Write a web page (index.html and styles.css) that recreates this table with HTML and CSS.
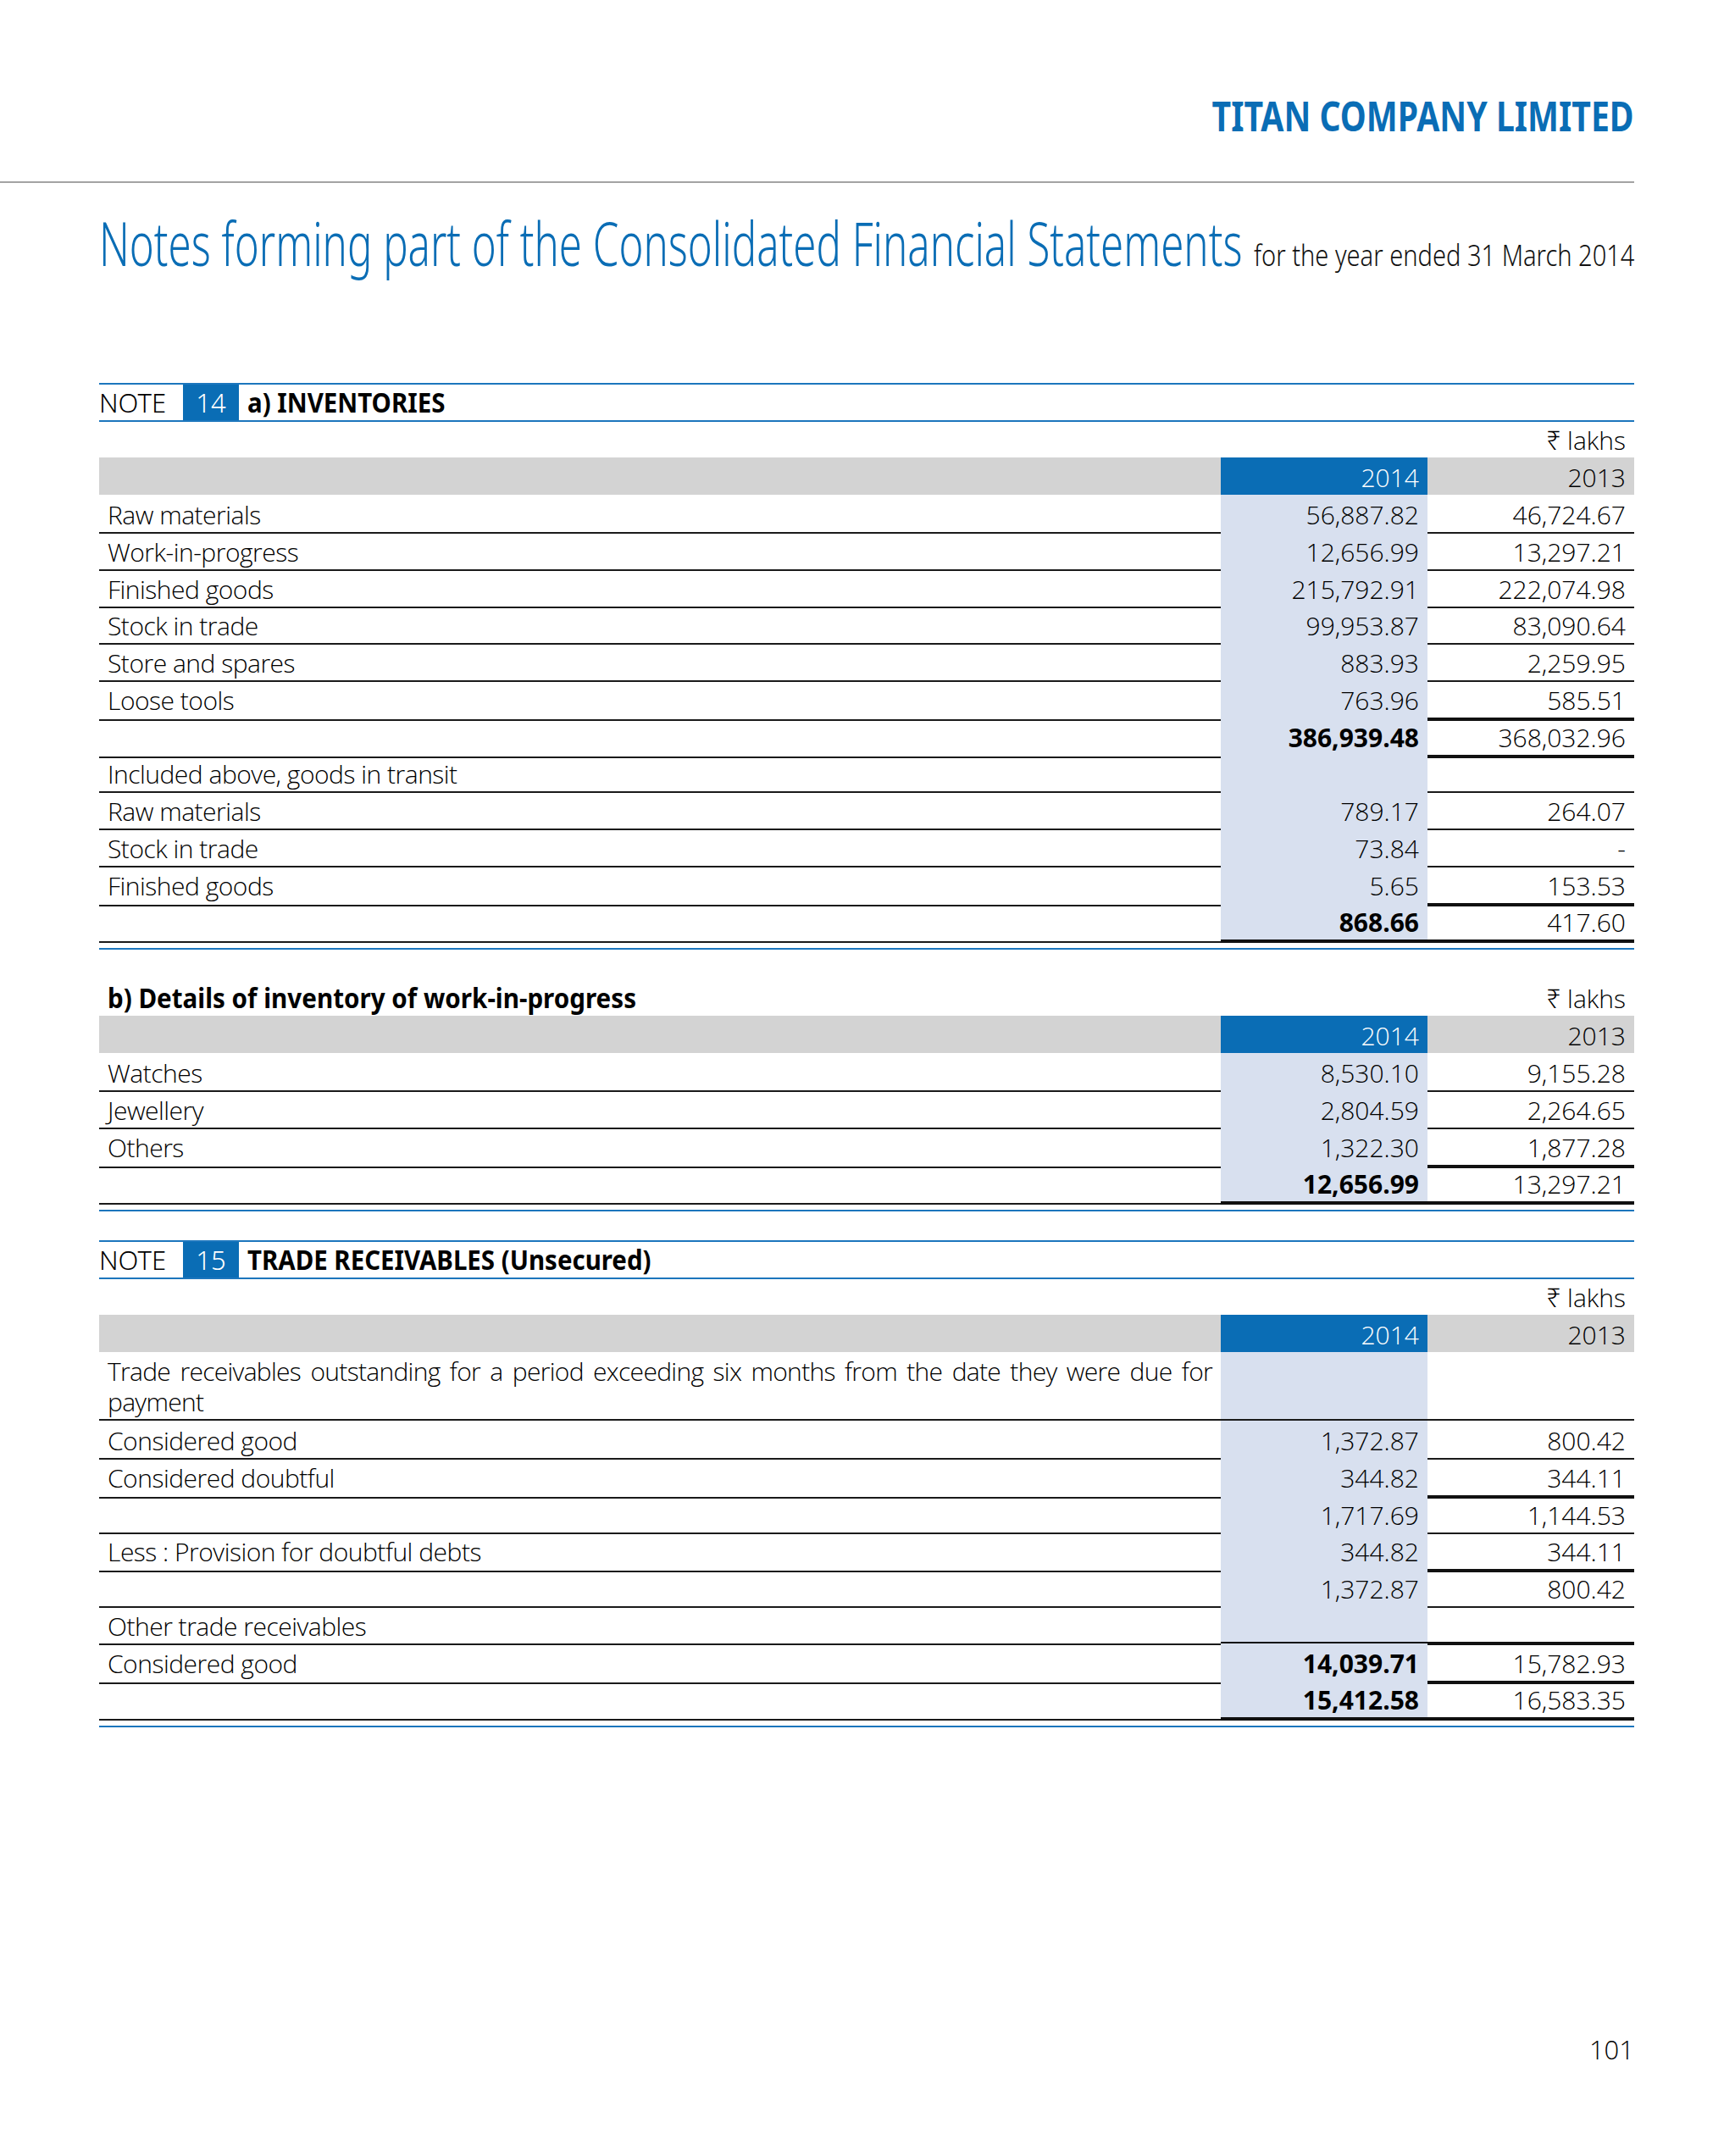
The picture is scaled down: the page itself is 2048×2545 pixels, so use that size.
FILE: index.html
```html
<!DOCTYPE html>
<html>
<head>
<meta charset="utf-8">
<link rel="stylesheet" href="styles.css">
</head>
<body>
<header class="masthead">
  <span class="company">TITAN COMPANY LIMITED</span>
</header>
<div class="page">
  <h1 class="title">
    <span class="title-main-box"><span class="title-main">Notes forming part of the Consolidated Financial Statements</span></span>
    <span class="title-sub-box"><span class="title-sub">for the year ended 31 March 2014</span></span>
  </h1>

  <section class="note note-14">
    <div class="note-head"><span class="note-label">NOTE</span><span class="note-num">14</span><span class="note-title">a) INVENTORIES</span></div>
    <div class="unit">₹ lakhs</div>
    <div class="tbl">
      <div class="r head"><div class="c l"></div><div class="c v cur">2014</div><div class="c v prev">2013</div></div>
      <div class="r"><div class="c l b1">Raw materials</div><div class="c v cur b1">56,887.82</div><div class="c v b1">46,724.67</div></div>
      <div class="r"><div class="c l b1">Work-in-progress</div><div class="c v cur b1">12,656.99</div><div class="c v b1">13,297.21</div></div>
      <div class="r"><div class="c l b1">Finished goods</div><div class="c v cur b1">215,792.91</div><div class="c v b1">222,074.98</div></div>
      <div class="r"><div class="c l b1">Stock in trade</div><div class="c v cur b1">99,953.87</div><div class="c v b1">83,090.64</div></div>
      <div class="r"><div class="c l b1">Store and spares</div><div class="c v cur b1">883.93</div><div class="c v b1">2,259.95</div></div>
      <div class="r"><div class="c l b1">Loose tools</div><div class="c v cur b2">763.96</div><div class="c v b2">585.51</div></div>
      <div class="r"><div class="c l b1"></div><div class="c v cur b2 bold">386,939.48</div><div class="c v b2">368,032.96</div></div>
      <div class="r"><div class="c l b1">Included above, goods in transit</div><div class="c v cur b1"></div><div class="c v b1"></div></div>
      <div class="r"><div class="c l b1">Raw materials</div><div class="c v cur b1">789.17</div><div class="c v b1">264.07</div></div>
      <div class="r"><div class="c l b1">Stock in trade</div><div class="c v cur b1">73.84</div><div class="c v b1">-</div></div>
      <div class="r"><div class="c l b1">Finished goods</div><div class="c v cur b2">5.65</div><div class="c v b2">153.53</div></div>
      <div class="r"><div class="c l b1"></div><div class="c v cur b2 bold">868.66</div><div class="c v b2">417.60</div></div>
    </div>
    <div class="close-rule"></div>
  </section>

  <section class="note note-b">
    <div class="sub-head"><span class="sub-title">b) Details of inventory of work-in-progress</span><span class="unit-inline">₹ lakhs</span></div>
    <div class="tbl">
      <div class="r head"><div class="c l"></div><div class="c v cur">2014</div><div class="c v prev">2013</div></div>
      <div class="r"><div class="c l b1">Watches</div><div class="c v cur b1">8,530.10</div><div class="c v b1">9,155.28</div></div>
      <div class="r"><div class="c l b1">Jewellery</div><div class="c v cur b1">2,804.59</div><div class="c v b1">2,264.65</div></div>
      <div class="r"><div class="c l b1">Others</div><div class="c v cur b2">1,322.30</div><div class="c v b2">1,877.28</div></div>
      <div class="r"><div class="c l b1"></div><div class="c v cur b2 bold">12,656.99</div><div class="c v b2">13,297.21</div></div>
    </div>
    <div class="close-rule"></div>
  </section>

  <section class="note note-15">
    <div class="note-head"><span class="note-label">NOTE</span><span class="note-num">15</span><span class="note-title">TRADE RECEIVABLES (Unsecured)</span></div>
    <div class="unit">₹ lakhs</div>
    <div class="tbl">
      <div class="r head"><div class="c l"></div><div class="c v cur">2014</div><div class="c v prev">2013</div></div>
      <div class="r tall"><div class="c l b1 wrap">Trade receivables outstanding for a period exceeding six months from the date they were due for payment</div><div class="c v cur b1"></div><div class="c v b1"></div></div>
      <div class="r"><div class="c l b1">Considered good</div><div class="c v cur b1">1,372.87</div><div class="c v b1">800.42</div></div>
      <div class="r"><div class="c l b1">Considered doubtful</div><div class="c v cur b2">344.82</div><div class="c v b2">344.11</div></div>
      <div class="r"><div class="c l b1"></div><div class="c v cur b1">1,717.69</div><div class="c v b1">1,144.53</div></div>
      <div class="r"><div class="c l b1">Less : Provision for doubtful debts</div><div class="c v cur b2">344.82</div><div class="c v b2">344.11</div></div>
      <div class="r"><div class="c l b1"></div><div class="c v cur b1">1,372.87</div><div class="c v b1">800.42</div></div>
      <div class="r"><div class="c l b1">Other trade receivables</div><div class="c v cur b2"></div><div class="c v b2"></div></div>
      <div class="r"><div class="c l b1">Considered good</div><div class="c v cur b2 bold">14,039.71</div><div class="c v b2">15,782.93</div></div>
      <div class="r"><div class="c l b1"></div><div class="c v cur b2 bold">15,412.58</div><div class="c v b2">16,583.35</div></div>
    </div>
    <div class="close-rule"></div>
  </section>

  <footer class="folio">101</footer>
</div>
</body>
</html>
```

FILE: styles.css
```css
html, body {
  margin: 0;
  padding: 0;
  background: #ffffff;
}

body {
  width: 2048px;
  height: 2545px;
  font-family: "Open Sans", "Noto Sans", sans-serif;
  font-weight: 350;
  color: #000;
}

.masthead {
  width: 1929px;
  height: 216px;
  box-sizing: border-box;
  padding-top: 108px;
  border-bottom: 2px solid #a3a3a3;
  text-align: right;
}

.company {
  display: inline-block;
  font-family: "Noto Sans", sans-serif;
  font-weight: 700;
  font-size: 49px;
  line-height: 56px;
  color: #0a6db5;
  transform: scaleX(0.8);
  transform-origin: right center;
}

.page {
  margin-left: 117px;
  width: 1812px;
}

.title {
  margin: 30px 0 0;
  height: 80px;
  line-height: 80px;
  font-weight: normal;
  display: flex;
  align-items: baseline;
  white-space: nowrap;
}

.title-main-box {
  flex: 1;
  min-width: 0;
}

.title-main {
  display: inline-block;
  font-family: "Noto Sans", sans-serif;
  font-weight: 300;
  font-size: 72px;
  color: #0a6db5;
  transform: scaleX(0.683);
  transform-origin: left center;
}

.title-sub-box {
  flex: none;
  width: 449px;
  display: flex;
  justify-content: flex-end;
}

.title-sub {
  display: inline-block;
  font-family: "Noto Sans", sans-serif;
  font-weight: 300;
  font-size: 35px;
  color: #111;
  transform: scaleX(0.83);
  transform-origin: right center;
}

.note-14 {
  margin-top: 126px;
}

.note-head {
  height: 46px;
  box-sizing: border-box;
  border-top: 2px solid #1c76bd;
  border-bottom: 2px solid #1c76bd;
  display: flex;
  align-items: stretch;
  white-space: nowrap;
}

.note-label {
  width: 99px;
  font-family: "Noto Sans", sans-serif;
  font-weight: 300;
  font-size: 31px;
  line-height: 42px;
}

.note-num {
  width: 66px;
  background: #0a6db5;
  color: #fff;
  text-align: center;
  font-family: "Noto Sans", sans-serif;
  font-weight: 300;
  font-size: 31px;
  line-height: 42px;
}

.note-title {
  display: inline-block;
  margin-left: 10px;
  font-family: "Noto Sans", sans-serif;
  font-weight: 700;
  font-size: 32px;
  line-height: 42px;
  transform: scaleX(0.92);
  transform-origin: left center;
}

.unit {
  height: 42px;
  line-height: 44px;
  text-align: right;
  padding-right: 10px;
  font-size: 30px;
}

.sub-head {
  height: 44px;
  display: flex;
  justify-content: space-between;
  align-items: baseline;
  padding: 0 10px;
  line-height: 46px;
  white-space: nowrap;
}

.sub-title {
  display: inline-block;
  font-family: "Noto Sans", sans-serif;
  font-weight: 700;
  font-size: 32px;
  transform: scaleX(0.925);
  transform-origin: left center;
}

.unit-inline {
  font-size: 30px;
}

.note-b {
  margin-top: 34px;
}

.note-15 {
  margin-top: 34px;
}

.tbl {
  display: flex;
  flex-direction: column;
}

.r {
  display: grid;
  grid-template-columns: 1fr 244px 244px;
  height: 43.75px;
}

.r.head {
  height: 44px;
}

.r.tall {
  height: 81px;
}

.c {
  box-sizing: border-box;
  padding: 4px 10px 0;
  font-size: 30px;
  line-height: 40px;
  white-space: nowrap;
}

.c.l {
  letter-spacing: -0.5px;
}

.c.v {
  text-align: right;
}

.c.cur {
  background: #d8e0ef;
}

.r.head .c {
  background: #d3d3d3;
}

.r.head .c.cur {
  background: #0a6db5;
  color: #fff;
}

.c.b1 {
  border-bottom: 2px solid #1a1a1a;
}

.c.b2 {
  border-bottom: 4px solid #111;
}

.c.bold {
  font-weight: 700;
}

.c.wrap {
  white-space: normal;
  text-align: justify;
  line-height: 36px;
  padding-top: 5px;
  letter-spacing: -0.7px;
}

.close-rule {
  margin-top: 10px;
  height: 2px;
  background: #1c76bd;
}

.folio {
  margin-top: 360px;
  text-align: right;
  font-size: 31px;
  line-height: 40px;
}
```
